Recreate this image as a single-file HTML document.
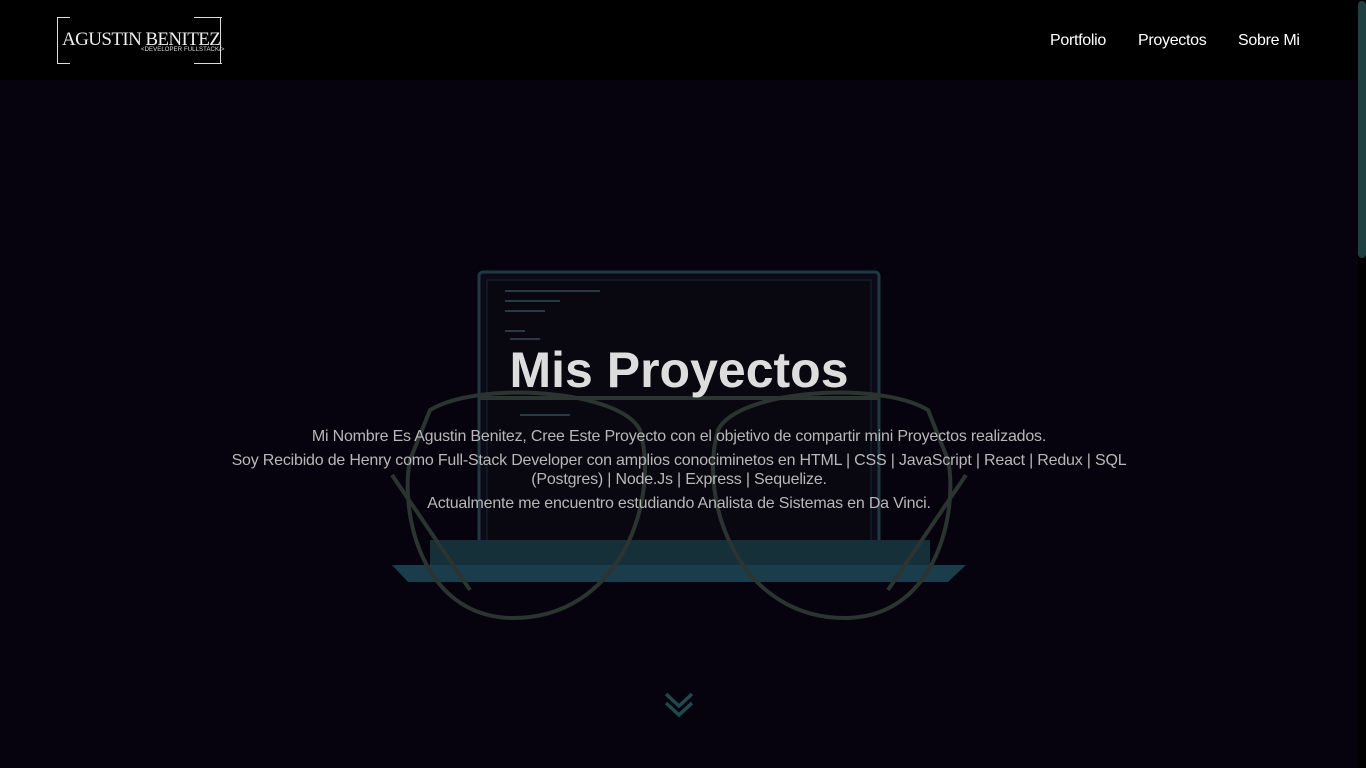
<!DOCTYPE html>
<html><head><meta charset="utf-8"><style>
*{margin:0;padding:0;box-sizing:border-box}
html,body{width:1366px;height:768px;overflow:hidden;background:#06030e;font-family:"Liberation Sans",sans-serif}
.nav{position:absolute;left:0;top:0;width:1358px;height:80px;background:#000}
.logo{position:absolute;left:57px;top:17px;width:164px;height:47px;border-left:1px solid #ddd;border-right:1px solid #ddd}
.logo:before,.logo:after{content:"";position:absolute;left:0;width:164px;height:1px;background:linear-gradient(90deg,#ddd 0 12px,transparent 12px 136px,#ddd 136px)}
.logo:before{top:0}.logo:after{bottom:0}
.logo .n{position:absolute;left:4px;top:12px;font-family:"Liberation Serif",serif;font-size:19px;color:#eee;letter-spacing:-0.6px;white-space:nowrap}
.logo .s{position:absolute;left:83px;top:30px;font-size:6px;color:#ddd;letter-spacing:0.1px;white-space:nowrap}
.menu{position:absolute;top:32px;font-size:16px;color:#fff;letter-spacing:-0.3px}
.sb{position:absolute;left:1358px;top:0;width:8px;height:768px;background:#000}
.sb div{position:absolute;left:0;top:1px;width:8px;height:257px;background:#1f4040;border-radius:4px}
h1{position:absolute;left:0;width:1358px;top:341px;text-align:center;font-size:50px;color:#ddd;font-weight:bold}
.p{position:absolute;left:214px;width:930px;text-align:center;color:#b8b8b8;font-size:16px;line-height:19px;letter-spacing:-0.2px}
</style></head><body>
<svg style="position:absolute;left:0;top:80px" width="1358" height="688">
<rect x="479" y="192" width="400" height="300" rx="4" fill="#0c0a18" stroke="#1d3a40" stroke-width="3"/>
<rect x="487" y="200" width="384" height="283" fill="#09070f" stroke="#152a30"/>
<g fill="#2a3a40"><rect x="505" y="210" width="95" height="2"/><rect x="505" y="220" width="55" height="2"/><rect x="505" y="230" width="40" height="2"/><rect x="505" y="250" width="20" height="2"/><rect x="510" y="258" width="30" height="2"/><rect x="520" y="334" width="50" height="2"/></g>
<polygon points="392,485 966,485 948,502 408,502" fill="#1b3c4a"/>
<rect x="430" y="460" width="500" height="25" fill="#16303a"/>
<g fill="none" stroke="#2b3430" stroke-width="4">
<path d="M430 330 C480 300 620 310 640 350 C660 420 620 540 510 538 C420 535 400 430 410 380 Z"/>
<path d="M928 330 C878 300 738 310 718 350 C698 420 738 540 848 538 C938 535 958 430 948 380 Z"/>
<path d="M480 318 L880 318"/>
<path d="M392 395 L470 510"/><path d="M966 395 L888 510"/>
</g>
<path d="M666 614 L679 626 L692 614 M666 623 L679 635 L692 623" fill="none" stroke="#1f4a4c" stroke-width="3.5"/>
</svg>
<div class="nav">
<div class="logo"><span class="n">AGUSTIN BENITEZ</span><span class="s">&lt;DEVELOPER FULLSTACK/&gt;</span></div>
<span class="menu" style="left:1050px">Portfolio</span>
<span class="menu" style="left:1138px">Proyectos</span>
<span class="menu" style="left:1238px">Sobre Mi</span>
</div>
<div class="sb"><div></div></div>
<h1>Mis Proyectos</h1>
<div class="p" style="top:427px">Mi Nombre Es Agustin Benitez, Cree Este Proyecto con el objetivo de compartir mini Proyectos realizados.</div>
<div class="p" style="top:451px">Soy Recibido de Henry como Full-Stack Developer con amplios conociminetos en HTML | CSS | JavaScript | React | Redux | SQL (Postgres) | Node.Js | Express | Sequelize.</div>
<div class="p" style="top:494px">Actualmente me encuentro estudiando Analista de Sistemas en Da Vinci.</div>
</body></html>
